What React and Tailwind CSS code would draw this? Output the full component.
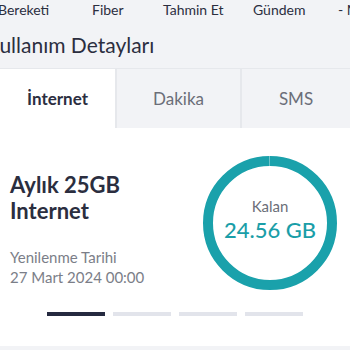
import React from 'react';

const menu = [
  { label: 'Bereketi', w: 'w-[94px]' },
  { label: 'Fiber', w: 'w-[71px]' },
  { label: 'Tahmin Et', w: 'w-[90px]' },
  { label: 'Gündem', w: 'w-[85px]' },
  { label: '- Mobil', w: 'w-[60px]' },
];

const tabs = [
  { label: 'İnternet', active: true, w: 'w-[115px]' },
  { label: 'Dakika', active: false, w: 'w-[123px]' },
  { label: 'SMS', active: false, w: 'flex-1' },
];

const App = () => {
  // ring: r=62, stroke 10 -> outer 134
  const r = 62;
  const c = 2 * Math.PI * r;

  return (
    <div className="w-[350px] h-[350px] overflow-hidden bg-[#f2f3f6] text-[#2b2e3f]" style={{ fontFamily: 'Lato, "Noto Sans", sans-serif' }}>
      {/* Top menu */}
      <div className="flex h-[20px] items-center -ml-[2px] whitespace-nowrap text-[14px] leading-none">
        {menu.map((m) => (
          <div key={m.label} className={`${m.w} shrink-0`}>{m.label}</div>
        ))}
      </div>

      {/* Title */}
      <h1 className="h-[48px] flex items-center -ml-[14px] text-[21px] leading-none whitespace-nowrap">
        Kullanım Detayları
      </h1>

      {/* Tabs */}
      <div className="flex h-[60px] gap-[2px] bg-[#e6e8ec] border-t border-[#e6e8ec]">
        {tabs.map((t) => (
          <div
            key={t.label}
            className={`${t.w} shrink-0 flex items-center justify-center text-[17px] ${
              t.active ? 'bg-white font-bold text-[#2b2e3f]' : 'bg-[#f2f3f6] text-[#6b6e78]'
            }`}
          >
            {t.label}
          </div>
        ))}
      </div>

      {/* Card */}
      <div className="bg-white h-[218px] pt-[28px]">
        <div className="flex">
          <div className="pl-[10px] pt-[16px] w-[203px]">
            <div className="text-[22px] font-bold leading-[26px]">Aylık 25GB</div>
            <div className="text-[22px] font-bold leading-[26px]">Internet</div>
            <div className="mt-[23px] text-[15px] leading-[20px] text-[#7b7e88]">Yenilenme Tarihi</div>
            <div className="text-[15px] leading-[20px] text-[#7b7e88]">27 Mart 2024 00:00</div>
          </div>
          <div className="relative w-[134px] h-[134px]">
            <svg width="134" height="134" viewBox="0 0 134 134" className="absolute inset-0 -rotate-90">
              <circle
                cx="67"
                cy="67"
                r={r}
                fill="none"
                stroke="#1aa1ab"
                strokeWidth="10"
                strokeDasharray={`${c - 1} 1`}
              />
            </svg>
            <div className="absolute inset-0 flex flex-col items-center justify-center pb-[6px]">
              <div className="text-[15px] leading-[20px] text-[#6b6e78]">Kalan</div>
              <div className="text-[22px] leading-[28px] text-[#1a9ea8] font-medium">24.56 GB</div>
            </div>
          </div>
        </div>

        {/* Pager */}
        <div className="flex justify-center gap-[8px] mt-[22px]">
          <div className="w-[58px] h-[4px] bg-[#252a40]" />
          <div className="w-[58px] h-[4px] bg-[#e2e4eb]" />
          <div className="w-[58px] h-[4px] bg-[#e2e4eb]" />
          <div className="w-[58px] h-[4px] bg-[#e2e4eb]" />
        </div>
      </div>
    </div>
  );
};

export default App;
